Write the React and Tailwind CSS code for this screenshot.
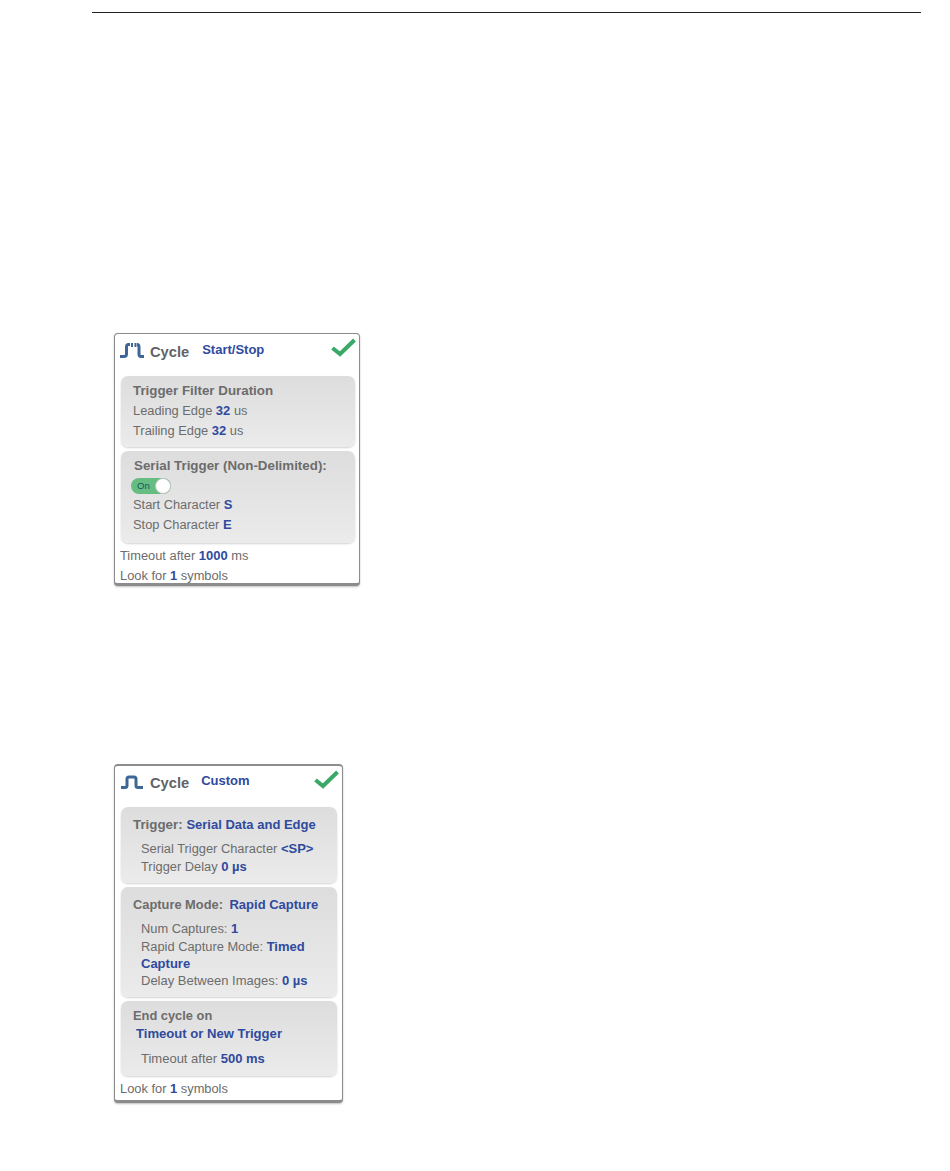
import React from 'react';

const Val = ({ children }) => <b className="text-[13px] font-bold text-[#2f4a9e]">{children}</b>;
const Head = ({ children }) => <span className="text-[13.35px] font-bold">{children}</span>;

function Check({ className }) {
  return (
    <svg className={className} width="25" height="20" viewBox="0 0 25 20" fill="none">
      <path d="M1.5 11 L9 17 L23.5 3" stroke="#3aa866" strokeWidth="4" />
    </svg>
  );
}

function PulseIcon() {
  return (
    <svg width="23" height="16" viewBox="0 0 23 16" fill="none" stroke="#3f6796" strokeWidth="3">
      <path d="M0 12.5 H4 Q6 12.5 6 10.5 V4 Q6 2 8 2 H13 Q15 2 15 4 V10.5 Q15 12.5 17 12.5 H22" />
    </svg>
  );
}

function DashedPulseIcon() {
  return (
    <svg width="25" height="16" viewBox="0 0 25 16" fill="none" stroke="#3f6796" strokeWidth="3">
      <path d="M0 13.5 H4 Q6.5 13.5 6.5 11 V4 Q6.5 1.5 8.5 1.5 H10" />
      <path d="M12 0 V4 M15.5 0 V4" strokeWidth="2" />
      <path d="M17 1.5 Q19 1.5 19 4 V11 Q19 13.5 21 13.5 H24" />
    </svg>
  );
}

function Panel({ className, children }) {
  return (
    <div className={`rounded-[7px] bg-gradient-to-b from-[#dddddd] to-[#ebebeb] shadow-[0_1px_2px_rgba(0,0,0,0.18)] ${className}`}>
      {children}
    </div>
  );
}

function Toggle() {
  return (
    <div className="flex h-[16px] w-[40px] items-center justify-between rounded-full bg-[#66bd82] pl-[6px]">
      <span className="text-[9.5px] leading-none text-[#12575e]">On</span>
      <span className="h-[16px] w-[16px] rounded-full border border-[#c4c4c4] bg-white" />
    </div>
  );
}

export default function App() {
  return (
    <div className="min-h-[1171px] bg-white pt-[12px] font-['Liberation_Sans',Arial,sans-serif] text-[12.85px] text-[#6c6c6c]">
      <div className="ml-[92px] h-px w-[829px] bg-[#222222]" />

      <div className="ml-[114px] mt-[320px] h-[253px] w-[246px] rounded-[4px] border border-b-[3px] border-[#8c8c8c] bg-white px-[5px] shadow-[0_1px_2px_rgba(0,0,0,0.25)]">
        <div className="flex h-[42px] items-start">
          <div className="mt-[9px]"><DashedPulseIcon /></div>
          <span className="ml-[5px] mt-[10px] text-[14.7px] font-bold leading-[16px] text-[#5f6368]">Cycle</span>
          <span className="ml-[13px] mt-[8px] text-[13px] font-bold leading-[15px] text-[#2f4a9e]">Start/Stop</span>
          <Check className="ml-auto mr-[-2px] mt-[3px]" />
        </div>
        <Panel className="ml-[1px] h-[71px] w-[234px] pl-[12px] pt-[5px] leading-[20px]">
          <div><Head>Trigger Filter Duration</Head></div>
          <div>Leading Edge <Val>32</Val> us</div>
          <div>Trailing Edge <Val>32</Val> us</div>
        </Panel>
        <Panel className="ml-[1px] mt-[4px] h-[92px] w-[234px] pl-[10px] pt-[5px] leading-[20px]">
          <div className="pl-[3px]"><Head>Serial Trigger (Non-Delimited):</Head></div>
          <div className="mt-[2px]"><Toggle /></div>
          <div className="mt-[1px] pl-[2px]">Start Character <Val>S</Val></div>
          <div className="pl-[2px]">Stop Character <Val>E</Val></div>
        </Panel>
        <div className="mt-[3px] leading-[20px]">Timeout after <Val>1000</Val> ms</div>
        <div className="leading-[20px]">Look for <Val>1</Val> symbols</div>
      </div>

      <div className="ml-[114px] mt-[178px] h-[339px] w-[229px] rounded-[4px] border border-b-[3px] border-t-[2px] border-[#8c8c8c] bg-white px-[5px] shadow-[0_1px_2px_rgba(0,0,0,0.25)]">
        <div className="flex h-[41px] items-start">
          <div className="ml-[1px] mt-[9px]"><PulseIcon /></div>
          <span className="ml-[6px] mt-[9px] text-[14.7px] font-bold leading-[16px] text-[#5f6368]">Cycle</span>
          <span className="ml-[12px] mt-[7px] text-[13px] font-bold leading-[15px] text-[#2f4a9e]">Custom</span>
          <Check className="ml-auto mr-[-2px] mt-[3px]" />
        </div>
        <Panel className="ml-[1px] h-[76px] w-[216px] pl-[12px] pt-[10px]">
          <div className="leading-[16px]"><Head>Trigger: </Head><Val>Serial Data and Edge</Val></div>
          <div className="mt-[7px] pl-[8px] leading-[18px]">
            <div>Serial Trigger Character <Val>&lt;SP&gt;</Val></div>
            <div>Trigger Delay <Val>0 µs</Val></div>
          </div>
        </Panel>
        <Panel className="ml-[1px] mt-[4px] h-[110px] w-[216px] pl-[12px] pt-[10px]">
          <div className="leading-[16px]"><span className="font-bold">Capture Mode: </span><span className="ml-[3px]"><Val>Rapid Capture</Val></span></div>
          <div className="mt-[7px] pl-[8px] leading-[17px]">
            <div>Num Captures: <Val>1</Val></div>
            <div className="mt-[1px]">Rapid Capture Mode: <Val>Timed</Val></div>
            <div><Val>Capture</Val></div>
            <div className="text-[13px]">Delay Between Images: <Val>0 µs</Val></div>
          </div>
        </Panel>
        <Panel className="ml-[1px] mt-[4px] h-[75px] w-[216px] pl-[12px] pt-[7px]">
          <div className="leading-[16px]"><span className="font-bold">End cycle on</span></div>
          <div className="mt-[2px] pl-[3px] text-[13.1px] font-bold leading-[16px] text-[#2f4a9e]">Timeout or New Trigger</div>
          <div className="mt-[8px] pl-[8px] text-[13px] leading-[17px]">Timeout after <Val>500 ms</Val></div>
        </Panel>
        <div className="mt-[3px] leading-[20px]">Look for <Val>1</Val> symbols</div>
      </div>
    </div>
  );
}
